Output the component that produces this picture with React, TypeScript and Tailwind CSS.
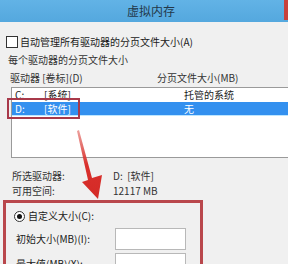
import React from 'react';

const font = { fontFamily: '"Noto Sans CJK SC", "Noto Sans", sans-serif' };

export default function App() {
  return (
    <div className="relative w-[288px] h-[264px] overflow-hidden bg-[#f0f0f0] text-[10px] leading-[14px] text-[#1a1a1a]" style={font}>
      {/* title bar */}
      <div className="relative h-[22px] bg-gradient-to-b from-[#62b3e6] to-[#54a8de] flex items-center justify-center">
        <span className="text-[12px] leading-[16px] text-[#23384a] pl-[14px]">虚拟内存</span>
        <div className="absolute right-0 top-0 w-[4px] h-[20px] bg-[#c8413c]" />
      </div>

      {/* auto manage */}
      <div className="flex items-center h-[12px] mt-[14px] pl-[6px]">
        <div className="w-[12px] h-[12px] border border-[#333] bg-white" />
        <span className="ml-[2px]">自动管理所有驱动器的分页文件大小(A)</span>
      </div>

      <div className="h-[14px] mt-[5px] pl-[8px] flex items-center text-[#333]">每个驱动器的分页文件大小</div>

      <div className="h-[14px] mt-[4px] pl-[10px] flex items-center text-[#333]">
        <span className="w-[147px]">驱动器 [卷标](D)</span>
        <span>分页文件大小(MB)</span>
      </div>

      {/* drive list */}
      <div className="ml-[11px] mt-[2px] h-[71px] border border-r-0 border-[#9a9a9a] bg-white">
        <div className="flex items-center h-[14px] pl-[3px]">
          <span className="w-[29px]">C:</span>
          <span className="w-[140px]">[系统]</span>
          <span>托管的系统</span>
        </div>
        <div className="flex items-center h-[14px] pl-[3px] bg-[#3390ef] text-white border-b border-[#bde6ff]">
          <span className="w-[29px]">D:</span>
          <span className="w-[140px]">[软件]</span>
          <span>无</span>
        </div>
      </div>

      {/* selected info */}
      <div className="mt-[11px] pl-[12px] flex flex-col gap-[1px] text-[#333]">
        <div className="flex items-center h-[14px]">
          <span className="w-[101px]">所选驱动器:</span>
          <span>D:&nbsp; [软件]</span>
        </div>
        <div className="flex items-center h-[14px]">
          <span className="w-[101px]">可用空间:</span>
          <span>12117 MB</span>
        </div>
      </div>

      {/* custom size box */}
      <div className="ml-[3px] mt-[2px] w-[200px] h-[80px] border-[3px] border-[#b9474c]">
        <div className="flex items-center h-[12px] mt-[7px] pl-[8px]">
          <div className="w-[11px] h-[11px] rounded-full border border-[#333] bg-white flex items-center justify-center">
            <div className="w-[5px] h-[5px] rounded-full bg-[#111]" />
          </div>
          <span className="ml-[3px]">自定义大小(C):</span>
        </div>
        <div className="flex items-center mt-[6px] pl-[10px]">
          <span className="w-[99px]">初始大小(MB)(I):</span>
          <div className="w-[71px] h-[22px] border border-[#b8b8b8] bg-white" />
        </div>
        <div className="flex items-center mt-[3px] pl-[10px]">
          <span className="w-[99px]">最大值(MB)(X):</span>
          <div className="w-[71px] h-[22px] border border-[#b8b8b8] bg-white" />
        </div>
      </div>

      {/* highlight around D row */}
      <div className="absolute left-[7px] top-[98px] w-[73px] h-[21px] border-2 border-[#a8394a]" />

      {/* red arrow */}
      <svg className="absolute left-0 top-0" width="288" height="264">
        <defs>
          <linearGradient id="ar" x1="0" y1="0" x2="0" y2="1">
            <stop offset="0" stopColor="#e0605a" stopOpacity="0.6" />
            <stop offset="0.5" stopColor="#d9302c" />
            <stop offset="1" stopColor="#d42a26" />
          </linearGradient>
        </defs>
        <polygon
          points="77,131 79,130 92,178 102,175 98,199 82,182 88,180"
          fill="url(#ar)"
        />
      </svg>
    </div>
  );
}
